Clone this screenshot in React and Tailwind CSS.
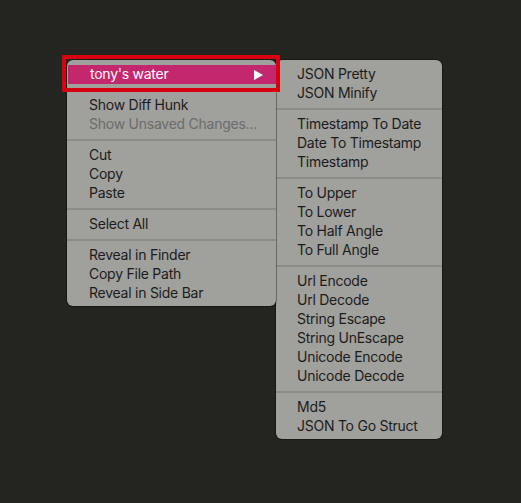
import React from "react";

const mainItems = [
  ["tony's water", "active"],
  "sep",
  ["Show Diff Hunk"],
  ["Show Unsaved Changes...", "disabled"],
  "sep",
  ["Cut"],
  ["Copy"],
  ["Paste"],
  "sep",
  ["Select All"],
  "sep",
  ["Reveal in Finder"],
  ["Copy File Path"],
  ["Reveal in Side Bar"],
];

const subItems = [
  ["JSON Pretty"],
  ["JSON Minify"],
  "sep",
  ["Timestamp To Date"],
  ["Date To Timestamp"],
  ["Timestamp"],
  "sep",
  ["To Upper"],
  ["To Lower"],
  ["To Half Angle"],
  ["To Full Angle"],
  "sep",
  ["Url Encode"],
  ["Url Decode"],
  ["String Escape"],
  ["String UnEscape"],
  ["Unicode Encode"],
  ["Unicode Decode"],
  "sep",
  ["Md5"],
  ["JSON To Go Struct"],
];

function MenuRows({ items, pad }) {
  return items.map((it, i) => {
    if (it === "sep") {
      return (
        <div key={i} className="h-[12px] flex items-center">
          <div className="w-full h-[2px] bg-[#8b8b87]" />
        </div>
      );
    }
    const [label, state] = it;
    if (state === "active") {
      return (
        <div
          key={i}
          className={`h-[19px] flex items-center justify-between ${pad} pr-[13px] pb-[2px] ml-px bg-[#c3286f] text-white`}
        >
          <span>{label}</span>
          <svg width="9" height="10" viewBox="0 0 9 10" className="mt-[2px]">
            <polygon points="0,0 9,5 0,10" fill="white" />
          </svg>
        </div>
      );
    }
    return (
      <div
        key={i}
        className={`h-[19px] flex items-center pb-[2px] ${pad} ${
          state === "disabled" ? "text-[#6c6c69]" : "text-[#1c1c1c]"
        }`}
      >
        {label}
      </div>
    );
  });
}

export default function App() {
  return (
    <div
      className="w-[521px] h-[503px] bg-[#242420] pt-[60px] pl-[67px] flex items-start text-[14px] leading-none tracking-[-0.25px]"
      style={{ fontFamily: "Inter, 'Liberation Sans', sans-serif" }}
    >
      <div className="relative w-[209px] bg-[#a0a09c] rounded-[6px] pt-[5px] pb-[3px] shadow-[0_0_0_1px_rgba(0,0,0,0.35)]">
        <MenuRows items={mainItems} pad="pl-[22px]" />
        {/* red highlight box */}
        <div className="absolute left-[-5px] top-[-5px] w-[218px] h-[37px] border-[4px] border-[#d6000e]" />
      </div>
      <div className="w-[166px] bg-[#a0a09c] rounded-[6px] pt-[5px] pb-[3px] shadow-[0_0_0_1px_rgba(0,0,0,0.35)]">
        <MenuRows items={subItems} pad="pl-[21px]" />
      </div>
    </div>
  );
}
